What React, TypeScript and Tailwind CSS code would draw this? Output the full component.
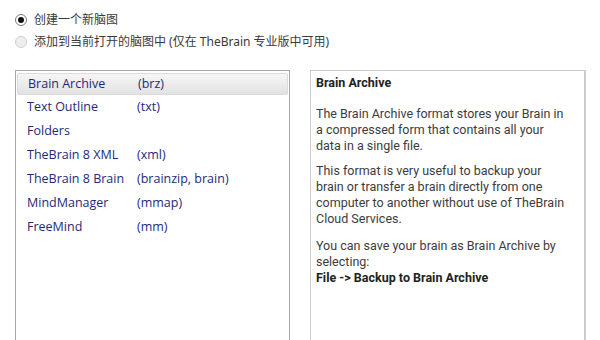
import React from "react";

const rows: [string, string][] = [
  ["Brain Archive", "(brz)"],
  ["Text Outline", "(txt)"],
  ["Folders", ""],
  ["TheBrain 8 XML", "(xml)"],
  ["TheBrain 8 Brain", "(brainzip, brain)"],
  ["MindManager", "(mmap)"],
  ["FreeMind", "(mm)"],
];

export default function App() {
  return (
    <div
      className="w-[600px] h-[340px] bg-white overflow-hidden pl-[15px] pt-[13px]"
      style={{ fontFamily: '"Noto Sans", "Noto Sans CJK SC", sans-serif' }}
    >
      <div className="flex flex-col gap-[8px] text-[12px] leading-[14px] text-[#3a3a3a]">
        <div className="flex items-center gap-[7px]">
          <span className="w-[12px] h-[12px] rounded-full border border-[#7a7a7a] bg-white flex items-center justify-center">
            <span className="w-[6px] h-[6px] rounded-full bg-[#111]" />
          </span>
          <span>创建一个新脑图</span>
        </div>
        <div className="flex items-center gap-[7px]">
          <span className="w-[12px] h-[12px] rounded-full border border-[#d0d0d0] bg-[#eeeeee]" />
          <span>添加到当前打开的脑图中 (仅在 TheBrain 专业版中可用)</span>
        </div>
      </div>

      <div className="flex gap-[20px] mt-[21px]">
        <div className="w-[275px] h-[290px] border border-[#a8a8a8] p-[1px] pt-[2px]">
          {rows.map(([name, ext], i) => (
            <div
              key={name}
              className={
                "flex items-center pl-[10px] text-[12.5px] text-[#1e2a78] " +
                (i === 0
                  ? "bg-gradient-to-b from-[#f6f6f6] to-[#e2e2e2] border border-[#dcdcdc] rounded-[2px] h-[22px]"
                  : "h-[24px]")
              }
              style={{ fontFamily: '"Open Sans", "Noto Sans", sans-serif' }}
            >
              <span className="w-[110px]">{name}</span>
              <span>{ext}</span>
            </div>
          ))}
        </div>

        <div
          className="w-[276px] h-[290px] border border-[#cccccc] border-r-2 pl-[5px] pr-[3px] pt-[4px] text-[12.5px] leading-[16px] text-[#3c3c3c] whitespace-nowrap"
          style={{ fontFamily: 'Roboto, "Liberation Sans", sans-serif' }}
        >
          <div className="font-bold text-[#222]">Brain Archive</div>
          <div className="h-[15px]" />
          <p>
            The Brain Archive format stores your Brain in
            <br />a compressed form that contains all your
            <br />data in a single file.
          </p>
          <div className="h-[9px]" />
          <p>
            This format is very useful to backup your
            <br />brain or transfer a brain directly from one
            <br />computer to another without use of TheBrain
            <br />Cloud Services.
          </p>
          <div className="h-[11px]" />
          <p>
            You can save your brain as Brain Archive by
            <br />selecting:
          </p>
          <p className="font-bold text-[#222]">File -&gt; Backup to Brain Archive</p>
        </div>
      </div>
    </div>
  );
}
